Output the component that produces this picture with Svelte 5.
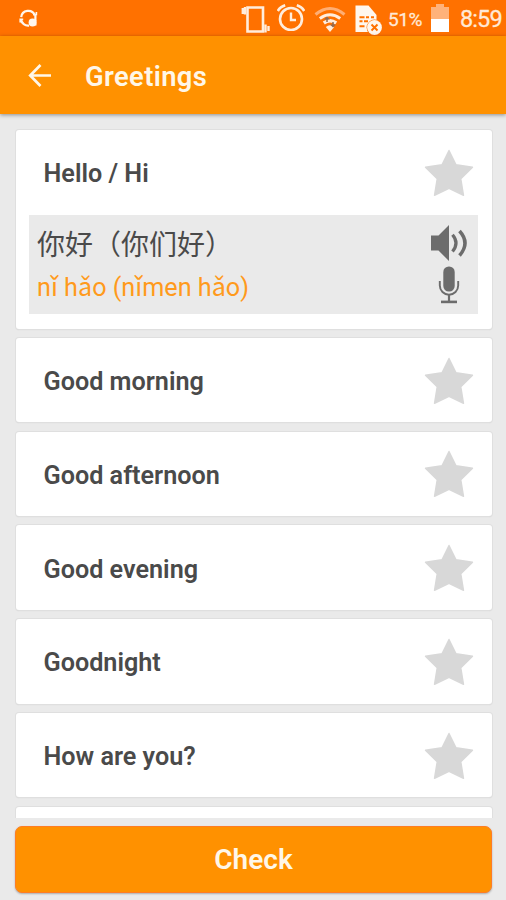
<script>
  const phrases = ['Good morning', 'Good afternoon', 'Good evening', 'Goodnight', 'How are you?'];
</script>

{#snippet star()}
  <svg class="star" width="50" height="48" viewBox="0 0 50 48" aria-hidden="true">
    <path d="M25 1.5 32 15.8 48.5 18.2 36.8 29.8 39.5 46.3 25 39.3 10.5 46.3 13.2 29.8 1.5 18.2 18 15.8Z" fill="#d8d8d8" stroke="#d8d8d8" stroke-width="1.4" stroke-linejoin="round" />
  </svg>
{/snippet}

<div class="screen">
  <div class="status">
    <svg class="sync" width="20" height="20" viewBox="0 0 20 20" fill="none" stroke="#fff7ee" stroke-width="2.2">
      <path d="M2.2 8.2A7.1 7.1 0 0 1 15.8 6.2M16.4 6v5.5M2 10.5A7.2 7.2 0 0 0 10 16.6" />
      <path d="M14 5.5h3.4V3M1.2 13.5V10.4h3" stroke-width="1.6" />
      <circle cx="13.5" cy="13.5" r="3.9" fill="#fff7ee" stroke="none" />
      <path d="M13 11h4.5v5.5H13z" fill="#fff7ee" stroke="none" />
    </svg>
    <svg class="phone" width="32" height="34" viewBox="0 0 32 34" fill="none" stroke="#ffeddd">
      <path d="M7.5 6.5H23v24H7.5z" stroke-width="2.6" />
      <path d="M2.8 7v6M5 6v7.5M25.5 23.5v8M28.5 25v5" stroke-width="2.4" />
    </svg>
    <svg class="alarm" width="28" height="30" viewBox="0 0 28 30" fill="none" stroke="#ffeddd" stroke-width="2.6">
      <circle cx="14" cy="18" r="11" />
      <path d="M14 11.5V19h5" stroke-width="2.4" />
      <path d="M.8 10Q3 6 8.2 4.3M27.2 10Q25 6 19.8 4.3" />
    </svg>
    <svg class="wifi" width="32" height="28" viewBox="0 0 32 28" fill="none">
      <path d="M1.5 9.5Q16-2.500 30.5 9.5" stroke="#ffae73" stroke-width="3" />
      <path d="M5.8 13.5Q16 6 26.2 13.5" stroke="#ffeddd" stroke-width="3" />
      <path d="M9.8 18Q16 13.6 22.2 18" stroke="#ffeddd" stroke-width="3.4" />
      <path d="M16 27 11.8 22Q16 18.7 20.2 22Z" fill="#ffeddd" />
      <path d="m10 14.5 3-3 3 3zM16 19.500l3 3 3-3z" fill="#8f6b55" />
      <path d="M13 13v4M19 17v4" stroke="#8f6b55" stroke-width="1.5" />
    </svg>
    <svg class="sim" width="30" height="32" viewBox="0 0 30 32">
      <path d="M1.5 1.5h13L22.5 11V28H1.5Z" fill="#fff7ee" />
      <path d="M5.5 13.2h5M12 13.2h3M17 13.2h3M5.5 17.2h3M10 17.2h4M5.5 22.2h5" stroke="#ff7100" stroke-width="2" />
      <circle cx="20.5" cy="23.5" r="7.9" fill="#ff7100" />
      <circle cx="20.5" cy="23.5" r="7.4" fill="#fff7ee" />
      <path d="m17.5 20.5 6 6M23.5 20.5l-6 6" stroke="#ff7100" stroke-width="1.9" />
    </svg>
    <span class="percent">51%</span>
    <svg class="battery" width="18" height="28" viewBox="0 0 18 28">
      <path d="M5 0h8v3h5v12H0V3h5z" fill="#ffb27a" />
      <path d="M0 15h18v13H0z" fill="#fff" />
    </svg>
    <span class="time">8:59</span>
  </div>

  <header>
    <svg class="back" width="24" height="24" viewBox="0 0 24 24" fill="none" stroke="#fff7e8" stroke-width="2.7" aria-label="Back">
      <path d="M23 12.5H2.5M12.5 2 2.2 12.5l10.3 10.5" />
    </svg>
    <h1>Greetings</h1>
  </header>

  <main>
    <section class="card open">
      <div class="row"><span class="phrase">Hello / Hi</span>{@render star()}</div>
      <div class="translation">
        <div class="words">
          <div class="hanzi" lang="zh-CN">你好（你们好）</div>
          <div class="pinyin">nǐ hǎo (nǐmen hǎo)</div>
        </div>
        <div class="tools">
          <svg width="38" height="38" viewBox="0 0 38 38" fill="none" stroke="#6c6c6c">
            <path d="M1 11.5h7.5L19 1v36L8.5 26.5H1Z" fill="#6c6c6c" stroke="none" />
            <path d="M22.5 10.8Q29.5 19 22.5 27.6" stroke-width="3.2" />
            <path d="M29.5 7Q40.5 19 29.5 31.5" stroke-width="3.5" />
          </svg>
          <svg width="22" height="38" viewBox="0 0 22 38" fill="none" stroke="#6c6c6c">
            <rect x="5.3" y="0.5" width="11.4" height="25" rx="5.5" fill="#6c6c6c" stroke="none" />
            <path d="M1.8 15v4.5a9.2 9.2 0 0 0 18.4 0V15" stroke-width="1.9" />
            <path d="M11 29v6" stroke-width="2.2" />
            <path d="M3 35.9h16" stroke-width="2.6" />
          </svg>
        </div>
      </div>
    </section>
    {#each phrases as phrase}
      <section class="card"><div class="row"><span class="phrase">{phrase}</span>{@render star()}</div></section>
    {/each}
    <section class="card"></section>
  </main>

  <footer><button>Check</button></footer>
</div>

<style>
  .screen {
    width: 506px;
    height: 900px;
    overflow: hidden;
    display: flex;
    flex-direction: column;
    background: #eaeaea;
    font-family: Roboto, 'Noto Sans CJK SC', sans-serif;
    color: #4a4a4a;
    white-space: nowrap;
  }
  .status {
    flex: none;
    height: 36px;
    display: flex;
    align-items: flex-start;
    background: #ff7100;
    color: #ffe9d6;
  }
  .status svg { flex: none; }
  .sync { margin: 9px 0 0 19px; }
  .phone { margin: 1px 0 0 201px; }
  .alarm { margin: 1px 0 0 5px; }
  .wifi { margin: 5px 0 0 9px; }
  .sim { margin: 4px 0 0 8px; }
  .percent { width: 34px; margin: 7px 0 0 4px; font-size: 19px; line-height: 26px; letter-spacing: -0.4px; -webkit-text-stroke: 0.3px; }
  .battery { margin: 4px 0 0 9px; }
  .time { margin: 5px 0 0 11px; font-size: 23.5px; line-height: 29px; letter-spacing: -0.9px; -webkit-text-stroke: 0.3px; }
  header {
    flex: none;
    position: relative;
    height: 78px;
    display: flex;
    align-items: center;
    background: #ff9100;
    box-shadow: 0 1px 4px #0006;
  }
  .back { margin: 0 0 0 28px; }
  h1 { margin: 4px 0 0 33px; font-size: 27.3px; font-weight: 600; line-height: 40px; letter-spacing: 0.4px; color: #fff7e8; }
  main {
    flex: none;
    height: 704px;
    padding: 16px 14px 0 16px;
    box-sizing: border-box;
    overflow: hidden;
    display: flex;
    flex-direction: column;
    gap: 9.3px;
    margin-bottom: 8px;
  }
  .card {
    flex: none;
    height: 84.5px;
    width: 475.5px;
    background: #fff;
    border-radius: 3px;
    box-shadow: 0 0 0 1px #dfdfdf, 0 1px 1px #c8c8c8;
  }
  .open { height: 198.5px; }
  .row {
    height: 84.5px;
    padding: 0 17.5px 0 27.5px;
    display: flex;
    align-items: center;
    justify-content: space-between;
  }
  .phrase { margin-top: 4px; font-size: 25.2px; font-weight: 600; line-height: 32px; }
  .star { margin-top: 1px; }
  .translation {
    height: 99px;
    margin: 0.5px 14px 0 13px;
    padding: 0 9px 0 8px;
    box-sizing: border-box;
    display: flex;
    justify-content: space-between;
    background: #eaeaea;
  }
  .hanzi { margin-top: 11px; font-size: 28px; line-height: 40px; }
  .pinyin { margin-top: 4px; font-size: 25.2px; line-height: 36px; color: #ff9a1c; }
  .tools { display: flex; flex-direction: column; align-items: center; gap: 4px; padding-top: 9px; margin-right: 1px; }
  footer { padding: 0 14px 0 15px; display: flex; }
  button {
    flex: 1;
    height: 67px;
    border: 1px solid #ff7d24;
    border-radius: 7px;
    background: #ff9100;
    color: #fff7e8;
    font: 600 28px/65px Roboto, sans-serif;
    padding: 0;
    box-shadow: 0 1px 2px #0004;
  }
</style>
